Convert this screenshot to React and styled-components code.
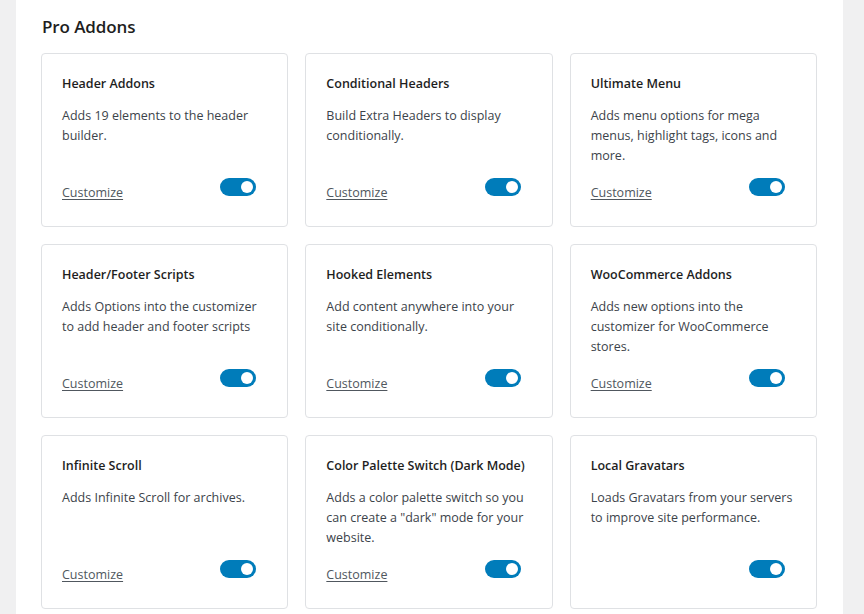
import React from "react";
import styled, { createGlobalStyle } from "styled-components";

const Global = createGlobalStyle`
  html, body { margin: 0; padding: 0; background: #f0f0f1; }
  body { font-family: "Open Sans", "Noto Sans", sans-serif; color: #1e1e1e; }
`;

const Page = styled.div`
  display: flex;
  min-height: 614px;
`;

const Panel = styled.main`
  margin-left: 16px;
  width: 827px;
  background: #fff;
  padding: 14px 26px 0 25px;
  box-sizing: border-box;
`;

const Heading = styled.h2`
  margin: 0 0 13px 1px;
  font-size: 17px;
  line-height: 26px;
  font-weight: 600;
  color: #1e1e1e;
  letter-spacing: -0.1px;
`;

const Grid = styled.div`
  display: grid;
  grid-template-columns: repeat(3, 1fr);
  grid-auto-rows: 174px;
  gap: 17px;
`;

const Card = styled.div`
  border: 1px solid #dfe1e4;
  border-radius: 4px;
  background: #fff;
  padding: 20px 20px 0;
  display: flex;
  flex-direction: column;
  box-sizing: border-box;
`;

const Title = styled.h3`
  margin: 0;
  font-size: 12.5px;
  line-height: 20px;
  font-weight: 600;
  color: #1e1e1e;
`;

const Desc = styled.p`
  margin: 12px 0 0;
  font-size: 12.5px;
  line-height: 20px;
  color: #3c434a;
`;

const Footer = styled.div`
  margin-top: auto;
  height: 48px;
  display: flex;
  justify-content: space-between;
  align-items: flex-start;
`;

const Link = styled.a`
  margin-top: 5px;
  font-size: 12.5px;
  line-height: 20px;
  color: #50575e;
  text-decoration: underline;
  text-underline-offset: 2px;
  cursor: pointer;
`;

const Toggle = styled.span`
  margin-right: 11px;
  width: 36px;
  height: 18px;
  border-radius: 9px;
  background: #007cba;
  position: relative;
  flex-shrink: 0;
  margin-left: auto;
  &::after {
    content: "";
    position: absolute;
    top: 3px;
    right: 3px;
    width: 12px;
    height: 12px;
    border-radius: 50%;
    background: #fff;
  }
`;

const addons = [
  { title: "Header Addons", desc: "Adds 19 elements to the header builder.", link: true },
  { title: "Conditional Headers", desc: "Build Extra Headers to display conditionally.", link: true },
  { title: "Ultimate Menu", desc: "Adds menu options for mega menus, highlight tags, icons and more.", link: true },
  { title: "Header/Footer Scripts", desc: "Adds Options into the customizer to add header and footer scripts", link: true },
  { title: "Hooked Elements", desc: "Add content anywhere into your site conditionally.", link: true },
  { title: "WooCommerce Addons", desc: "Adds new options into the customizer for WooCommerce stores.", link: true },
  { title: "Infinite Scroll", desc: "Adds Infinite Scroll for archives.", link: true },
  { title: "Color Palette Switch (Dark Mode)", desc: 'Adds a color palette switch so you can create a "dark" mode for your website.', link: true },
  { title: "Local Gravatars", desc: "Loads Gravatars from your servers to improve site performance.", link: false },
];

export default function App() {
  return (
    <Page>
      <Global />
      <Panel>
        <Heading>Pro Addons</Heading>
        <Grid>
          {addons.map((a) => (
            <Card key={a.title}>
              <Title>{a.title}</Title>
              <Desc>{a.desc}</Desc>
              <Footer>
                {a.link && <Link>Customize</Link>}
                <Toggle />
              </Footer>
            </Card>
          ))}
        </Grid>
      </Panel>
    </Page>
  );
}
